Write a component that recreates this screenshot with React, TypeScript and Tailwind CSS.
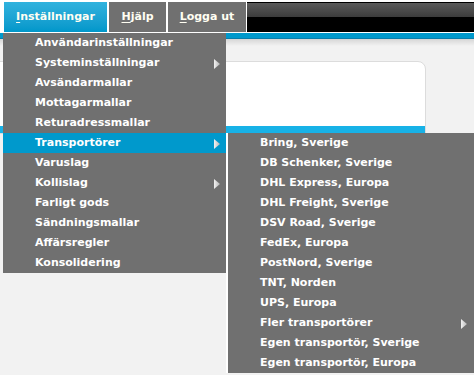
import React from "react";

const mainItems: { label: string; sub?: boolean; active?: boolean }[] = [
  { label: "Användarinställningar" },
  { label: "Systeminställningar", sub: true },
  { label: "Avsändarmallar" },
  { label: "Mottagarmallar" },
  { label: "Returadressmallar" },
  { label: "Transportörer", sub: true, active: true },
  { label: "Varuslag" },
  { label: "Kollislag", sub: true },
  { label: "Farligt gods" },
  { label: "Sändningsmallar" },
  { label: "Affärsregler" },
  { label: "Konsolidering" },
];

const carriers: { label: string; sub?: boolean }[] = [
  { label: "Bring, Sverige" },
  { label: "DB Schenker, Sverige" },
  { label: "DHL Express, Europa" },
  { label: "DHL Freight, Sverige" },
  { label: "DSV Road, Sverige" },
  { label: "FedEx, Europa" },
  { label: "PostNord, Sverige" },
  { label: "TNT, Norden" },
  { label: "UPS, Europa" },
  { label: "Fler transportörer", sub: true },
  { label: "Egen transportör, Sverige" },
  { label: "Egen transportör, Europa" },
];

function Arrow() {
  return (
    <svg width="6" height="10" viewBox="0 0 6 10" className="shrink-0">
      <defs>
        <linearGradient id="arr" x1="0" y1="0" x2="1" y2="0">
          <stop offset="0" stopColor="#f2f2f2" />
          <stop offset="1" stopColor="#b8b8b8" />
        </linearGradient>
      </defs>
      <polygon points="0,0 6,5 0,10" fill="url(#arr)" />
    </svg>
  );
}

function MenuRow({ label, sub, active, pr }: { label: string; sub?: boolean; active?: boolean; pr: string }) {
  return (
    <div
      className={`h-[20px] flex items-center justify-between pt-[1px] pl-[32px] ${pr} text-white ${
        active ? "bg-[#0099cc]" : ""
      }`}
    >
      <span>{label}</span>
      {sub && <Arrow />}
    </div>
  );
}

function Tab({ first, rest, active, width }: { first: string; rest: string; active?: boolean; width: string }) {
  return (
    <div
      className={`${width} h-[30px] flex items-center justify-center text-[#fffef2] ${
        active ? "bg-gradient-to-b from-[#2fb2de] to-[#0097ca]" : "bg-[#707070]"
      }`}
    >
      <span>
        <span className="underline underline-offset-2">{first}</span>
        {rest}
      </span>
    </div>
  );
}

export default function App() {
  return (
    <div className="relative w-[474px] h-[375px] overflow-hidden bg-[#f2f2f2] font-['DejaVu_Sans',Verdana,sans-serif] text-[11px] font-bold">
      {/* Header */}
      <div className="h-[33px] bg-white pt-[2px] pl-[4px] flex gap-[2px] border-b border-white">
        <Tab first="I" rest="nställningar" active width="w-[103px]" />
        <Tab first="H" rest="jälp" width="w-[57px]" />
        <Tab first="L" rest="ogga ut" width="w-[78px]" />
        <div className="-ml-[1px] flex-1 h-[30px] bg-[linear-gradient(#000_0,#000_1px,#5a5a5a_1px,#3c3c3c_15px,#000_15px)]" />
      </div>
      <div className="h-[6px] bg-[#0099cc] border-b border-[#0a7eaa]" />
      <div className="h-[7px] bg-gradient-to-b from-[#d6d6d6] to-[#f2f2f2]" />

      {/* Content */}
      <div className="mt-[15px] w-[427px] -ml-[1px] h-[73px] bg-white border border-[#dcdcdc] rounded-tr-[8px] flex flex-col justify-end overflow-hidden">
        <div className="h-[7px] bg-[#18b2e7]" />
      </div>

      {/* Dropdown */}
      <div className="absolute left-[3px] top-[33px] w-[223px] bg-[#707070]">
        {mainItems.map((it) => (
          <MenuRow key={it.label} {...it} pr="pr-[6px]" />
        ))}
      </div>
      <div className="absolute left-[226px] top-[133px] w-[248px] bg-[#707070] border-l-2 border-white">
        {carriers.map((it) => (
          <MenuRow key={it.label} {...it} pr="pr-[7px]" />
        ))}
      </div>
    </div>
  );
}
